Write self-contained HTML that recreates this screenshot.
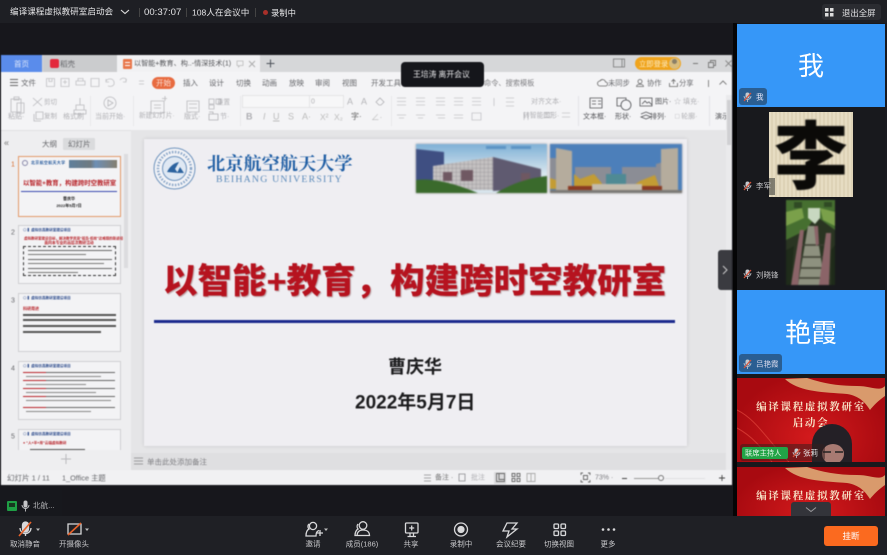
<!DOCTYPE html>
<html lang="zh"><head><meta charset="utf-8"><title>编译课程虚拟教研室启动会</title>
<style>
*{box-sizing:border-box;margin:0;padding:0}
html,body{width:887px;height:555px;overflow:hidden;background:#17171c}
body{position:relative;font-family:"Liberation Sans","Noto Sans CJK SC",sans-serif}
.a,.t{position:absolute}
.t{white-space:nowrap;line-height:1;transform:translateY(-50%)}
.c{transform:translate(-50%,-50%);text-align:center}
.w{color:#e4e4e6}
.g{color:#7f7f83;font-size:7.5px}
.k{color:#66676b;font-size:7.5px}
.f{color:#b0b0b4;font-size:7.5px}
.blur{filter:blur(.55px)}
.lab{color:#c8c8cb;font-size:7.5px;transform:translate(-50%,-50%);position:absolute;white-space:nowrap;line-height:1}
svg{position:absolute;overflow:visible}
.th{position:absolute;left:18px;width:103px;background:#f3f3f5;border:1px solid #cfcfd2}
.ln{position:absolute;height:1px;background:#555}
</style></head><body>

<!-- top bar -->
<div class="a" style="left:0;top:0;width:887px;height:23px;background:#1e1f24"></div>
<div class="t w" style="left:10px;top:12px;font-size:8.6px">编译课程虚拟教研室启动会</div>
<svg style="left:120px;top:9px" width="10" height="6"><path d="M1 1l4 3.5L9 1" fill="none" stroke="#ddd" stroke-width="1.1"/></svg>
<div class="a" style="left:139px;top:8px;width:1px;height:9px;background:#444"></div>
<div class="t w" style="left:144px;top:12.5px;font-size:9.6px">00:37:07</div>
<div class="a" style="left:186px;top:8px;width:1px;height:9px;background:#444"></div>
<div class="t w" style="left:192px;top:12.5px;font-size:8.6px">108人在会议中</div>
<div class="a" style="left:255px;top:8px;width:1px;height:9px;background:#444"></div>
<div class="a" style="left:263px;top:10px;width:5px;height:5px;border-radius:50%;background:#a8302a"></div>
<div class="t w" style="left:271px;top:12.5px;font-size:8.3px">录制中</div>
<div class="a" style="left:822px;top:4px;width:59px;height:16px;background:#2b2c31;border-radius:3px"></div>
<svg style="left:825px;top:8px" width="9" height="9"><path d="M0 0h3.5v3.5H0zM5 0h3.5v3.5H5zM0 5h3.5v3.5H0zM5 5h3.5v3.5H5z" fill="#ddd"/></svg>
<div class="t w" style="left:842px;top:12.5px;font-size:8.4px">退出全屏</div>

<!-- shared screen -->
<div class="a blur" style="left:0;top:0;width:733px;height:490px;overflow:hidden">
<div class="a" style="left:1px;top:55px;width:731px;height:430px;background:#e6e6e8"></div>
<!-- tabs -->
<div class="a" style="left:1px;top:55px;width:731px;height:17px;background:#d6d7d9"></div>
<div class="a" style="left:1px;top:55px;width:41px;height:17px;background:#5a8ceb"></div>
<div class="t" style="left:14px;top:64px;font-size:7.5px;color:#dfe8fb">首页</div>
<div class="a" style="left:43px;top:55px;width:74px;height:17px;background:#cbccce"></div>
<div class="a" style="left:50px;top:59px;width:9px;height:9px;border-radius:2px;background:#e3283c"></div>
<div class="t k" style="left:60px;top:64px">稻壳</div>
<div class="a" style="left:117px;top:55px;width:143px;height:17px;background:#f1f1f3"></div>
<div class="a" style="left:123px;top:59px;width:9px;height:10px;border-radius:1px;background:#e8764a"></div>
<div class="a" style="left:125px;top:62px;width:5px;height:1px;background:#fff"></div>
<div class="a" style="left:125px;top:65px;width:5px;height:1px;background:#fff"></div>
<div class="t" style="left:134px;top:64px;font-size:7.1px;color:#55565a">以智能+教育、构..-情深技术(1)</div>
<svg style="left:236px;top:60px" width="8" height="8"><path d="M1 1h6v4.5H4L2.5 7V5.500H1z" fill="none" stroke="#bbb" stroke-width=".8"/></svg>
<svg style="left:248px;top:60px" width="8" height="8"><path d="M1 1l6 6M7 1L1 7" stroke="#aaa" stroke-width=".9"/></svg>
<svg style="left:266px;top:59px" width="9" height="9"><path d="M4.500 .5v8M.5 4.500h8" stroke="#4c5058" stroke-width="1"/></svg>
<svg style="left:613px;top:58px" width="13" height="10"><path d="M.5 1h11v8H.5zM9 1v8" fill="none" stroke="#777" stroke-width=".8"/></svg>
<div class="a" style="left:635px;top:57px;width:46px;height:13px;border-radius:7px;background:#f0a41c"></div>
<div class="t" style="left:639px;top:63.500px;font-size:7.300px;color:#fcecc4">立即登录</div>
<div class="a" style="left:669px;top:58px;width:11px;height:11px;border-radius:50%;background:#d9bd7e"></div>
<div class="a" style="left:672px;top:59px;width:5px;height:5px;border-radius:50%;background:#8a7f67"></div>
<div class="a" style="left:693px;top:63px;width:5px;height:1px;background:#777"></div>
<svg style="left:708px;top:60px" width="8" height="8"><path d="M.5 2.500h5v5h-5zM2.500 2.500V.5h5v5H5.500" fill="none" stroke="#777" stroke-width=".9"/></svg>
<svg style="left:725px;top:60px" width="7" height="7"><path d="M.5.5l6 6M6.500.5l-6 6" stroke="#888" stroke-width=".9"/></svg>

<!-- ribbon -->
<div class="a" style="left:1px;top:72px;width:731px;height:58px;background:#f4f4f6"></div>
<svg style="left:10px;top:79px" width="8" height="7"><path d="M0 .5h8M0 3.500h8M0 6.500h8" stroke="#666" stroke-width=".9"/></svg>
<div class="t k" style="left:21px;top:83px">文件</div>
<svg style="left:46px;top:78px" width="100" height="10" fill="none" stroke="#c0c0c3" stroke-width=".8"><path d="M.5.5h8v8h-8zM3 .5v3h3v-3M15 .5h8v8h-8zM19 2v4M17 4h4M30 3h9v4h-9zM32 3V.5h5V3M45 .5h8v8h-8zM60 3c2-3 7-3 8 1s-3 5-6 4M60 1v3h3M80 3c2-3-4-4-6-1M80 1v3h-3"/><path d="M93 3h5M93 6h5"/></svg>
<div class="a" style="left:152px;top:77px;width:23px;height:12px;border-radius:7px;background:#e86b40"></div>
<div class="t c" style="left:163.500px;top:83px;font-size:7.500px;color:#fbe3d8">开始</div>
<div class="t k" style="left:183px;top:83px">插入</div>
<div class="t k" style="left:209px;top:83px">设计</div>
<div class="t k" style="left:236px;top:83px">切换</div>
<div class="t k" style="left:262px;top:83px">动画</div>
<div class="t k" style="left:289px;top:83px">放映</div>
<div class="t k" style="left:315px;top:83px">审阅</div>
<div class="t k" style="left:342px;top:83px">视图</div>
<div class="t k" style="left:371px;top:83px">开发工具</div>
<div class="t g" style="left:484px;top:83px;font-size:7.200px">命令、搜索模板</div>
<svg style="left:598px;top:79px" width="9" height="8"><path d="M2 7a2.500 2.500 0 0 1 0-5 3 3 0 0 1 5.500 1 2 2 0 0 1 0 4z" fill="none" stroke="#666" stroke-width=".8"/></svg>
<div class="t k" style="left:608px;top:83px;font-size:7.300px">未同步</div>
<svg style="left:636px;top:79px" width="8" height="8"><circle cx="4" cy="2.500" r="2" fill="none" stroke="#666" stroke-width=".8"/><path d="M.5 7.500c0-3 7-3 7 0z" fill="none" stroke="#666" stroke-width=".8"/></svg>
<div class="t k" style="left:647px;top:83px;font-size:7.300px">协作</div>
<svg style="left:669px;top:79px" width="9" height="8"><path d="M.5 4v3.500h8V4M4.500 5V1M2.500 2.500l2-2 2 2" fill="none" stroke="#666" stroke-width=".8"/></svg>
<div class="t k" style="left:679px;top:83px;font-size:7.300px">分享</div>
<div class="a" style="left:708px;top:80px;width:1px;height:7px;background:#888"></div>
<svg style="left:719px;top:80px" width="8" height="5"><path d="M.5 4.500L4 1l3.500 3.500" fill="none" stroke="#666" stroke-width=".8"/></svg>

<!-- ribbon left icons -->
<svg style="left:10px;top:96px" width="240" height="20" fill="none" stroke="#b8b8bc" stroke-width=".8">
<path d="M1 3h10v13H1zM4 1h5v3H4zM7 7h7v10H7z"/>
<path d="M23 2l9 8M32 2l-9 8"/>
<path d="M64 14h12v4H64zM70 2v7M66 9h8v5h-8z"/>
<circle cx="100" cy="7" r="6"/><path d="M98 4l5 3-5 3z"/>
<path d="M141 5h13v12h-13zM144 9h7M144 12h7M155 0v5M152 2.500h5"/>
<path d="M177 5h12v11h-12zM179 8h8M179 12h8"/>
<path d="M199 3h5v5h-5zM206 3h5v5h-5zM199 9h5v4h-5z"/>
</svg>
<div class="t f" style="left:44px;top:103px;font-size:6.500px">剪切</div>
<div class="t f" style="left:217px;top:103px;font-size:6.500px">重置</div>
<svg style="left:33px;top:111px" width="12" height="11" fill="none" stroke="#b8b8bc" stroke-width=".8"><path d="M3 1h7v7H3zM1 3v7h7"/></svg>
<div class="t f" style="left:8px;top:117px;font-size:7px">粘贴·</div>
<div class="t f" style="left:44px;top:117px;font-size:6.500px">复制</div>
<div class="t f" style="left:63px;top:117px;font-size:7px">格式刷</div>
<div class="t f" style="left:95px;top:117px;font-size:7px">当前开始·</div>
<div class="t f" style="left:139px;top:117px;font-size:6.700px">新建幻灯片·</div>
<div class="t f" style="left:184px;top:117px;font-size:7px">版式·</div>
<svg style="left:208px;top:111px" width="11" height="10" fill="none" stroke="#b0b0b4" stroke-width=".8"><path d="M1 3h9v6H1zM1 1h4v2"/></svg>
<div class="t f" style="left:220px;top:117px;font-size:7px">节·</div>

<!-- font controls -->
<div class="a" style="left:242px;top:95px;width:68px;height:13px;border:1px solid #e4e4e6;background:#f7f7f8"></div>
<div class="a" style="left:309px;top:95px;width:35px;height:13px;border:1px solid #e4e4e6;background:#f7f7f8"></div>
<div class="t f" style="left:311px;top:102px;font-size:7px">0</div>
<div class="t" style="left:246px;top:117px;font-size:9px;color:#aeaeb2;font-weight:700">B</div>
<div class="t" style="left:263px;top:117px;font-size:9px;color:#bbb;font-style:italic">I</div>
<div class="t" style="left:273px;top:117px;font-size:9px;color:#bbb;text-decoration:underline">U</div>
<div class="t" style="left:288px;top:117px;font-size:9px;color:#bbb">S</div>
<div class="t" style="left:302px;top:117px;font-size:9px;color:#bbb">A·</div>
<div class="t" style="left:320px;top:117px;font-size:8.500px;color:#bbb">X²</div>
<div class="t" style="left:334px;top:117px;font-size:8.500px;color:#bbb">X₂</div>
<div class="t" style="left:351px;top:117px;font-size:8px;color:#666">字·</div>
<div class="t" style="left:371px;top:117px;font-size:8.500px;color:#bbb">∠·</div>
<div class="t" style="left:347px;top:102px;font-size:9px;color:#b5b5b8">A</div>
<div class="t" style="left:361px;top:102px;font-size:9px;color:#b5b5b8">A</div>
<svg style="left:375px;top:97px" width="10" height="9"><path d="M1 5l4-4 4 4-3 3H4z" fill="none" stroke="#b0b0b4" stroke-width=".8"/></svg>

<!-- paragraph controls -->
<svg style="left:396px;top:97px" width="180" height="25" fill="none" stroke="#c4c4c8" stroke-width=".8">
<path d="M1 1h9M1 4.500h9M1 8h9M20 1h9M20 4.500h9M20 8h9M40 1h9M40 4.500h9M40 8h9M58 1h9M58 4.500h9M58 8h9M76 1h9M76 4.500h9M76 8h9"/>
<path d="M1 18h9M3 21h5M20 18h9M22 21h5M40 18h9M42 21h7M58 18h9M58 21h9M76 16h9v7h-9z"/>
<path d="M98 1v8M110 1h8M110 5h8M110 9h8"/>
<path d="M128 16v7M132 16v7M148 16h8M148 20h8M166 16h8M166 20h8"/>
</svg>
<div class="t f" style="left:531px;top:102px;font-size:7px">对齐文本·</div>
<div class="t f" style="left:523px;top:117px;font-size:6.800px">转智能图形·</div>
<div class="a" style="left:578px;top:96px;width:1px;height:30px;background:#e3e3e6"></div>

<!-- right ribbon -->
<svg style="left:589px;top:97px" width="120" height="25" fill="none" stroke="#4f5054" stroke-width=".8">
<path d="M1 1h12v10H1zM3 4h4M3 7h4M9 4h3M9 7h3"/>
<path d="M28 1h9v8h-9z"/><circle cx="37" cy="8" r="5" fill="#f4f4f6"/>
<path d="M51 1h12v8H51zM53 7l3-3 2 2 2-1 3 3"/>
<path d="M52 20l5-2 5 2-5 2zM52 17l5-2 5 2"/>
</svg>
<div class="t" style="left:655px;top:102px;font-size:7px;color:#505155">图片·</div>
<div class="t f" style="left:674px;top:102px;font-size:7px">☆ 填充·</div>
<div class="t" style="left:583px;top:117px;font-size:7px;color:#505155">文本框·</div>
<div class="t" style="left:615px;top:117px;font-size:7px;color:#505155">形状·</div>
<div class="t" style="left:650px;top:117px;font-size:7px;color:#505155">排列·</div>
<div class="t f" style="left:675px;top:117px;font-size:7px">□ 轮廓·</div>
<div class="t" style="left:715px;top:117px;font-size:7px;color:#505155">演示</div>
<div class="a" style="left:709px;top:96px;width:1px;height:30px;background:#e3e3e6"></div>
<div class="a" style="left:90px;top:96px;width:1px;height:30px;background:#e8e8ea"></div>
<div class="a" style="left:133px;top:96px;width:1px;height:30px;background:#e8e8ea"></div>
<div class="a" style="left:240px;top:96px;width:1px;height:30px;background:#e8e8ea"></div>
<div class="a" style="left:391px;top:96px;width:1px;height:30px;background:#e8e8ea"></div>

<!-- left panel -->
<div class="a" style="left:1px;top:130px;width:130px;height:340px;background:#eeeef0"></div>
<div class="a" style="left:1px;top:130px;width:731px;height:1px;background:#e0e0e2"></div>
<div class="t" style="left:4px;top:143px;font-size:9px;color:#777">«</div>
<div class="t k" style="left:42px;top:144px;font-size:7.500px">大纲</div>
<div class="a" style="left:63px;top:138px;width:32px;height:12px;background:#dadbdd;border-radius:1px"></div>
<div class="t k" style="left:68px;top:144px;font-size:7.500px">幻灯片</div>
<div class="a" style="left:124px;top:154px;width:4px;height:114px;background:#dcdcdf"></div>

<div class="t" style="left:11px;top:165px;font-size:7px;color:#d86a2a">1</div>
<div class="t k" style="left:11px;top:233px;font-size:7px">2</div>
<div class="t k" style="left:11px;top:301px;font-size:7px">3</div>
<div class="t k" style="left:11px;top:369px;font-size:7px">4</div>
<div class="t k" style="left:11px;top:437px;font-size:7px">5</div>

<!-- thumb 1 -->
<div class="th" style="top:156px;height:61px;border:1.500px solid #e39a6a"></div>
<div class="a" style="left:22px;top:160px;width:6px;height:6px;border-radius:50%;border:1px solid #88a;"></div>
<div class="t" style="left:31px;top:163px;font-size:4px;color:#2a5d9e;font-weight:700;letter-spacing:.3px">北京航空航天大学</div>
<div class="a" style="left:69px;top:160px;width:48px;height:8px;background:linear-gradient(90deg,#5f7f9c,#6f7a80 45%,#6d8fb5 55%,#857f70)"></div>
<div class="t" style="left:23px;top:184px;font-size:6.400px;color:#b8242a;font-weight:700">以智能+教育，构建跨时空教研室</div>
<div class="a" style="left:21px;top:191px;width:96px;height:1px;background:#3a4ab0"></div>
<div class="t c" style="left:69px;top:199px;font-size:4px;color:#222;font-weight:700">曹庆华</div>
<div class="t c" style="left:69px;top:206px;font-size:4px;color:#222;font-weight:700">2022年5月7日</div>

<!-- thumb 2 -->
<div class="th" style="top:225px;height:59px"></div>
<div class="t" style="left:23px;top:231px;font-size:3.600px;color:#2c4b8c;font-weight:700">◎ ▍虚拟仿真教研室建设项目</div>
<div class="t" style="left:24px;top:239px;font-size:3.500px;color:#b8242a;font-weight:700">虚拟教研室建设目标，解决教学资源“孤岛·低效”这难题的新途径</div>
<div class="t c" style="left:69px;top:244px;font-size:3.800px;color:#b8242a;font-weight:700">面向本专业的高层次教研活动</div>
<div class="a" style="left:23px;top:246px;width:93px;height:30px;border:1.500px dashed #333"></div>
<div class="ln" style="left:28px;top:250px;width:84px;background:#666"></div>
<div class="ln" style="left:28px;top:254px;width:58px;background:#777"></div>
<div class="ln" style="left:28px;top:259px;width:84px;background:#666"></div>
<div class="ln" style="left:28px;top:263px;width:76px;background:#777"></div>
<div class="ln" style="left:28px;top:268px;width:84px;background:#666"></div>
<div class="ln" style="left:28px;top:272px;width:50px;background:#777"></div>

<!-- thumb 3 -->
<div class="th" style="top:293px;height:59px"></div>
<div class="t" style="left:23px;top:299px;font-size:3.600px;color:#2c4b8c;font-weight:700">◎ ▍虚拟仿真教研室建设项目</div>
<div class="t" style="left:23px;top:309px;font-size:4px;color:#b8242a;font-weight:700">科研用途</div>
<div class="a" style="left:23px;top:314px;width:93px;height:1.500px;background:#555"></div>
<div class="a" style="left:23px;top:319px;width:93px;height:1.500px;background:#555"></div>
<div class="a" style="left:23px;top:325px;width:93px;height:1.500px;background:#555"></div>
<div class="a" style="left:23px;top:331px;width:78px;height:1.500px;background:#555"></div>

<!-- thumb 4 -->
<div class="th" style="top:361px;height:59px"></div>
<div class="t" style="left:23px;top:367px;font-size:3.600px;color:#2c4b8c;font-weight:700">◎ ▍虚拟仿真教研室建设项目</div>
<div class="a" style="left:23px;top:372px;width:92px;height:1px;background:linear-gradient(90deg,#b8242a 25%,#666 25%)"></div>
<div class="ln" style="left:26px;top:376px;width:75px;background:#888"></div>
<div class="a" style="left:23px;top:380px;width:92px;height:1px;background:linear-gradient(90deg,#b8242a 25%,#666 25%)"></div>
<div class="ln" style="left:26px;top:384px;width:60px;background:#888"></div>
<div class="a" style="left:23px;top:388px;width:92px;height:1px;background:linear-gradient(90deg,#b8242a 25%,#666 25%)"></div>
<div class="ln" style="left:26px;top:392px;width:70px;background:#888"></div>
<div class="a" style="left:23px;top:396px;width:92px;height:1px;background:linear-gradient(90deg,#b8242a 25%,#666 25%)"></div>
<div class="ln" style="left:26px;top:400px;width:85px;background:#888"></div>
<div class="a" style="left:23px;top:407px;width:92px;height:1px;background:linear-gradient(90deg,#b8242a 25%,#666 25%)"></div>
<div class="ln" style="left:26px;top:411px;width:65px;background:#888"></div>

<!-- thumb 5 -->
<div class="th" style="top:429px;height:21px;border-bottom:0"></div>
<div class="t" style="left:23px;top:435px;font-size:3.600px;color:#2c4b8c;font-weight:700">◎ ▍虚拟仿真教研室建设项目</div>
<div class="t" style="left:23px;top:444px;font-size:3.600px;color:#b8242a;font-weight:700">● “人+平+用”云端虚拟教研</div>
<div class="ln" style="left:30px;top:449px;width:55px"></div>
<div class="a" style="left:1px;top:450px;width:130px;height:20px;background:#eeeef0"></div>
<svg style="left:61px;top:454px" width="10" height="10"><path d="M5 0v10M0 5h10" stroke="#b9b9bc" stroke-width="1"/></svg>

<!-- canvas -->
<div class="a" style="left:131px;top:130px;width:601px;height:323px;background:#e5e5e7"></div>
<div class="a" style="left:144px;top:139px;width:543px;height:307px;background:#efeef2;box-shadow:0 0 3px #c4c4c6"></div>
<!-- logo -->
<svg style="left:153px;top:147px" width="43" height="43">
<circle cx="21.500" cy="21.500" r="20.500" fill="#f2f3f7" stroke="#6e93bd" stroke-width="1"/>
<circle cx="21.500" cy="21.500" r="12" fill="#dfe8f3" stroke="#6e93bd" stroke-width="1"/>
<circle cx="21.500" cy="21.500" r="16.500" fill="none" stroke="#8aa6c8" stroke-width="2.500" stroke-dasharray="1.500 1.500"/>
<path d="M14 25c3-6 7-9 12-10l-4 7 3 4zM27 20l4 6h-7z" fill="#2c639f"/>
</svg>
<div class="t" style="left:207px;top:164px;font-size:18.200px;color:#1f5ea4;font-weight:700;font-family:'Liberation Serif','Noto Serif CJK SC',serif">北京航空航天大学</div>
<div class="t" style="left:216px;top:180px;font-size:9.800px;color:#5a8aba;letter-spacing:1.200px;font-family:'Liberation Serif',serif">BEIHANG UNIVERSITY</div>

<!-- photos -->
<svg style="left:416px;top:144px;box-shadow:0 0 2px #999;filter:blur(.5px)" width="131" height="49" viewBox="0 0 131 49">
<defs><linearGradient id="s1" x1="0" y1="0" x2="0" y2="1"><stop offset="0" stop-color="#7eb0d6"/><stop offset=".6" stop-color="#d8e6ee"/></linearGradient>
<pattern id="gr" width="4" height="4" patternUnits="userSpaceOnUse"><rect width="4" height="4" fill="#c6c3c3"/><path d="M0 0h4M0 0v4" stroke="#8f8c90" stroke-width=".8"/></pattern></defs>
<rect width="131" height="49" fill="url(#s1)"/>
<path d="M70 2h20v3H70zM95 2h20v3H95z" fill="#5c93c4"/>
<path d="M0 5l28 3v28H0z" fill="#3f4f82"/>
<path d="M17 22l60-9 0 33H17z" fill="url(#gr)"/>
<path d="M77 13l48 12v19l-48 3z" fill="#5f5a70"/>
<path d="M27 28h9v9h-9zM45 26h12v11H45zM105 29h9v11h-9z" fill="#6f5862"/>
<path d="M0 36c15-2 35 2 62 13H0zM80 49c15-9 32-15 51-17v17z" fill="#3a6a2c"/>
</svg>
<svg style="left:550px;top:144px;box-shadow:0 0 2px #999;filter:blur(.5px)" width="132" height="49" viewBox="0 0 132 49">
<rect width="132" height="49" fill="#4c7fba"/>
<path d="M0 14h6v30H0zM25 23h36v22H25zM72 23h34v22H72zM106 20l22-6v30h-22z" fill="#8b8d95"/>
<path d="M6 4l16 3v39H6zM111 5l17-1v42h-17z" fill="#b5ac9d"/>
<path d="M56 30h20v11H56z" fill="#4f8a94"/>
<path d="M24 45V30l6 5 14-5 6 7 6 8zM78 45l12-8 15-6 5 14zM0 34l6 2v9H0z" fill="#c39c34"/>
<path d="M18 42h24v4H18zM92 42h20v4H92z" fill="#8a3a22"/>
<path d="M42 40h50v9H42z" fill="#c3bcae"/>
<path d="M0 46h132v3H0z" fill="#7a7875"/>
</svg>

<div class="t" style="left:163px;top:282px;font-size:34.500px;color:#b6131f;font-weight:900;font-family:'Liberation Sans','Noto Sans CJK SC',sans-serif;text-shadow:1px 1px 1px #b9a2a5">以智能+教育，构建跨时空教研室</div>
<div class="a" style="left:154px;top:320px;width:521px;height:2.500px;background:#1b2a8e"></div>
<div class="t" style="left:388px;top:367px;font-size:18px;color:#1c1c1e;font-weight:700">曹庆华</div>
<div class="t" style="left:355px;top:403px;font-size:19px;color:#1c1c1e;font-weight:700">2022年5月7日</div>

<!-- notes -->
<div class="a" style="left:131px;top:453px;width:601px;height:17px;background:#dfdfe1"></div>
<svg style="left:134px;top:457px" width="9" height="8"><path d="M0 1h9M0 4h9M0 7h9" stroke="#9a9a9d" stroke-width=".9"/></svg>
<div class="t g" style="left:147px;top:461.500px">单击此处添加备注</div>

<!-- status -->
<div class="a" style="left:1px;top:470px;width:731px;height:15px;background:#f1f1f3"></div>
<div class="t k" style="left:7px;top:478px;font-size:7.500px">幻灯片 1 / 11</div>
<div class="t k" style="left:62px;top:478px;font-size:7.300px">1_Office 主题</div>
<svg style="left:423px;top:473px" width="120" height="11" fill="none" stroke="#8a8a8e" stroke-width=".8"><path d="M1 2h7M1 5h7M1 8h7M36 1h6v7h-6z"/></svg>
<div class="t f" style="left:435px;top:478px;font-size:7px;color:#777">备注 ·</div>
<div class="t f" style="left:471px;top:478px;font-size:7px">批注</div>
<div class="a" style="left:494px;top:472px;width:12px;height:12px;background:#dcdcde"></div>
<svg style="left:496px;top:473px" width="70" height="10" fill="none" stroke="#666" stroke-width=".9"><path d="M.5.5h8v8h-8zM3 .5v6h5.500"/><path d="M16 .5h3v3h-3zM21 .5h3v3h-3zM16 5.500h3v3h-3zM21 5.500h3v3h-3z"/><path d="M31 .5h8v8h-8zM35 .5v8" stroke="#aaa"/></svg>
<svg style="left:581px;top:473px" width="9" height="9" fill="none" stroke="#666" stroke-width=".9"><path d="M0 2V0h2M7 0h2v2M9 7v2H7M2 9H0V7M2.500 2.500h4v4h-4z"/></svg>
<div class="t g" style="left:595px;top:478px;font-size:7px">73% ·</div>
<div class="a" style="left:622px;top:477.500px;width:5px;height:1px;background:#444"></div>
<div class="a" style="left:634px;top:478px;width:30px;height:1px;background:#999"></div>
<div class="a" style="left:658px;top:475px;width:6px;height:6px;border-radius:50%;background:#f4f4f6;border:1px solid #777"></div>
<div class="a" style="left:665px;top:478px;width:40px;height:1px;background:#e0e0e2"></div>
<svg style="left:719px;top:475px" width="6" height="6"><path d="M3 0v6M0 3h6" stroke="#444" stroke-width=".9"/></svg>

<!-- right scrollbar -->
<div class="a" style="left:726px;top:95px;width:6px;height:375px;background:#eaeaec"></div>
<div class="a" style="left:727px;top:100px;width:4px;height:45px;background:#d0d0d3"></div>

<!-- dark overlay tab -->
<div class="a" style="left:718px;top:250px;width:14px;height:40px;background:#3a3b40;border-radius:3px 0 0 3px"></div>
<svg style="left:722px;top:265px" width="6" height="10"><path d="M1 1l4 4-4 4" fill="none" stroke="#ccc" stroke-width="1"/></svg>

<!-- toast -->
<div class="a" style="left:401px;top:62px;width:83px;height:25px;background:#15161b;border-radius:4px"></div>
<div class="t" style="left:413px;top:75px;font-size:7.800px;color:#e6e6e8">王培涛 离开会议</div>
</div>

<!-- mic status -->
<div class="a" style="left:0;top:490px;width:62px;height:26px;background:#17181d"></div>
<div class="a" style="left:7px;top:501px;width:10px;height:10px;background:#1f9e45;border-radius:1px"></div>
<div class="a" style="left:9px;top:503px;width:6px;height:4px;background:#17351f"></div>
<svg style="left:21px;top:500px" width="9" height="12"><rect x="2.500" y=".5" width="4" height="7" rx="2" fill="#c5c5c8"/><path d="M1 5a3.500 3.500 0 0 0 7 0M4.500 9v2.500" fill="none" stroke="#c5c5c8" stroke-width=".9"/></svg>
<div class="t" style="left:33px;top:505.500px;font-size:7.600px;color:#b5b5b8">北航...</div>

<!-- right column -->
<div class="a" style="left:733px;top:23px;width:4px;height:493px;background:#050506"></div>
<div class="a" style="left:737px;top:23px;width:150px;height:493px;background:#18191d"></div>
<div class="a" style="left:885px;top:23px;width:2px;height:493px;background:#1a1a1f"></div>

<div class="a" style="left:737px;top:24px;width:148px;height:83px;background:#3697f8"></div>
<div class="t c" style="left:811px;top:66px;font-size:26px;color:#fff;font-family:'Liberation Sans','WenQuanYi Zen Hei','Noto Sans CJK SC',sans-serif">我</div>
<div class="a" style="left:739px;top:88px;width:28px;height:17px;background:#2a5e92;border-radius:3px"></div>
<svg style="left:743px;top:92px" width="9" height="10"><rect x="2.500" y=".5" width="4" height="6" rx="2" fill="#c5c9cf"/><path d="M1 4a3.500 3.500 0 0 0 7 0M4.500 7.500V10" fill="none" stroke="#c5c9cf" stroke-width=".8"/><path d="M1 9L8 1" stroke="#d8533a" stroke-width="1.200"/></svg>
<div class="t" style="left:756px;top:97px;font-size:7.500px;color:#eef">我</div>

<!-- 李 -->
<div class="a" style="left:769px;top:112px;width:84px;height:85px;background:repeating-linear-gradient(90deg,#e6dcc2 0 2px,#ded3b7 2px 4px);overflow:hidden">
<div class="t c" style="left:42px;top:40px;font-size:74px;line-height:1;color:#0b0a08;font-weight:900;font-family:'Noto Sans CJK SC',sans-serif;filter:blur(.7px)">李</div>
</div>
<svg style="left:743px;top:181px" width="9" height="10"><rect x="2.500" y=".5" width="4" height="6" rx="2" fill="#c5c9cf"/><path d="M1 4a3.500 3.500 0 0 0 7 0M4.500 7.500V10" fill="none" stroke="#c5c9cf" stroke-width=".8"/><path d="M1 9L8 1" stroke="#d8533a" stroke-width="1.200"/></svg>
<div class="a" style="left:769px;top:178px;width:6px;height:17px;background:#55554f;opacity:.7"></div>
<div class="t" style="left:756px;top:186px;font-size:7.500px;color:#c9c9cc">李军</div>

<!-- forest -->
<svg style="left:786px;top:200px;filter:blur(.8px)" width="49" height="85" viewBox="0 0 49 85">
<rect width="49" height="85" fill="#2a3522"/>
<path d="M0 0h49v30L30 16 20 30 0 40z" fill="#466f30"/>
<path d="M22 8h12v10l-5 6-7-6z" fill="#c8d8c0"/>
<path d="M34 8l15 4v14l-12-6zM0 12l16-4 2 10L0 26z" fill="#7aa04a"/>
<path d="M8 2h8v6H8zM38 2h8v5h-8z" fill="#2f4a24"/>
<path d="M22 26h8l9 59H12z" fill="#8e917f"/>
<path d="M16 45h22M14 57h26M12 68h30M10 78h34" stroke="#3a3d30" stroke-width="1.500"/>
<path d="M5 85l9-55h4L12 85zM33 85l7-52h5l-2 52zM28 26l2 20 3-2-1-18z" fill="#8b6468"/>
<path d="M0 50l8-4-3 39H0zM45 50l4-5v40h-4z" fill="#1f2b1a"/>
</svg>
<svg style="left:743px;top:269px" width="9" height="10"><rect x="2.500" y=".5" width="4" height="6" rx="2" fill="#c5c9cf"/><path d="M1 4a3.500 3.500 0 0 0 7 0M4.500 7.500V10" fill="none" stroke="#c5c9cf" stroke-width=".8"/><path d="M1 9L8 1" stroke="#d8533a" stroke-width="1.200"/></svg>
<div class="t" style="left:756px;top:274.500px;font-size:7.500px;color:#c9c9cc">刘晓锋</div>

<!-- 艳霞 -->
<div class="a" style="left:737px;top:290px;width:148px;height:84px;background:#3697f8"></div>
<div class="t c" style="left:811px;top:333px;font-size:26px;color:#fff;font-family:'Liberation Sans','WenQuanYi Zen Hei','Noto Sans CJK SC',sans-serif">艳霞</div>
<div class="a" style="left:739px;top:354px;width:43px;height:18px;background:#2a5e92;border-radius:3px"></div>
<svg style="left:743px;top:359px" width="9" height="10"><rect x="2.500" y=".5" width="4" height="6" rx="2" fill="#c5c9cf"/><path d="M1 4a3.500 3.500 0 0 0 7 0M4.500 7.500V10" fill="none" stroke="#c5c9cf" stroke-width=".8"/><path d="M1 9L8 1" stroke="#d8533a" stroke-width="1.200"/></svg>
<div class="t" style="left:756px;top:363.500px;font-size:7.500px;color:#dde">吕艳霞</div>

<!-- red tile 1 -->
<div class="a" style="left:737px;top:378px;width:148px;height:84px;overflow:hidden;background:radial-gradient(ellipse at 50% 70%,#d31a1c,#a80a10 75%)">
<svg style="left:0;top:0" width="148" height="84"><path d="M48 1L70 0C85 5 100 8 120 8 135 8 142 14 148 8V18C142 22 136 28 133 32 128 24 122 18 110 16 85 14 62 14 48 1Z" fill="#d99a6c"/><path d="M0 32c20 10 30 30 52 52M0 50c15 8 25 20 35 34" fill="none" stroke="#e0453a" stroke-width="1" opacity=".7"/></svg>
<div class="t c" style="left:74px;top:30px;font-size:10.500px;font-weight:700;letter-spacing:1.700px;color:#f8e4c8;font-family:'Liberation Serif','Noto Serif CJK SC',serif">编译课程虚拟教研室</div>
<div class="t c" style="left:74px;top:46px;font-size:10.500px;font-weight:700;letter-spacing:1.700px;color:#f8e4c8;font-family:'Liberation Serif','Noto Serif CJK SC',serif">启动会</div>
<svg style="left:0;top:0" width="148" height="84"><circle cx="95" cy="66" r="20" fill="#242026"/><path d="M75 84V66h40v18z" fill="#242026"/><ellipse cx="96" cy="76" rx="11" ry="10" fill="#a87a72"/><path d="M86 74h8M98 74h8" stroke="#222" stroke-width="1.500"/></svg>
<div class="a" style="left:3px;top:66px;width:85px;height:17px;background:rgba(50,30,30,.5);border-radius:3px"></div>
<div class="a" style="left:5px;top:69px;width:46px;height:12px;background:#22a447;border-radius:2px"></div>
<div class="t" style="left:8px;top:75px;font-size:7.300px;color:#e6f5e8">联席主持人</div>
<svg style="left:55px;top:70px" width="9" height="10"><rect x="2.500" y=".5" width="4" height="6" rx="2" fill="#c5c9cf"/><path d="M1 4a3.500 3.500 0 0 0 7 0M4.500 7.500V10" fill="none" stroke="#c5c9cf" stroke-width=".8"/><path d="M1 9L8 1" stroke="#d8533a" stroke-width="1.200"/></svg>
<div class="t" style="left:66px;top:75px;font-size:7.500px;color:#eee">张莉</div>
</div>

<!-- red tile 2 -->
<div class="a" style="left:737px;top:467px;width:148px;height:49px;overflow:hidden;background:radial-gradient(ellipse at 50% 90%,#d31a1c,#a80a10 75%)">
<svg style="left:0;top:0" width="148" height="49"><path d="M48 1L70 0C85 5 100 8 120 8 135 8 142 14 148 8V18C142 22 136 28 133 32 128 24 122 18 110 16 85 14 62 14 48 1Z" fill="#d99a6c"/></svg>
<div class="t c" style="left:74px;top:30px;font-size:10.500px;font-weight:700;letter-spacing:1.700px;color:#f8e4c8;font-family:'Liberation Serif','Noto Serif CJK SC',serif">编译课程虚拟教研室</div>
</div>
<div class="a" style="left:791px;top:502px;width:40px;height:14px;background:#33343a;border-radius:3px 3px 0 0"></div>
<svg style="left:805px;top:507px" width="12" height="6"><path d="M1 .5l5 4 5-4" fill="none" stroke="#9a9a9d" stroke-width="1"/></svg>

<!-- bottom bar -->
<div class="a" style="left:0;top:516px;width:887px;height:39px;background:#1f2025"></div>
<svg style="left:0;top:516px" width="887" height="39" fill="none" stroke="#d8d8da" stroke-width="1.300">
<!-- mic off -->
<rect x="22.500" y="6" width="6" height="10" rx="3" fill="#d8d8da"/><path d="M20 12a5.500 5.500 0 0 0 11 0M25.500 18v2"/><path d="M19 20L31 6" stroke="#e8622a" stroke-width="1.600"/>
<path d="M36 12.500h4l-2 2.500z" fill="#bbb" stroke="none"/>
<!-- cam off -->
<path d="M68 8h13v10H68z"/><path d="M68 19L81 7" stroke="#e8622a" stroke-width="1.600"/>
<path d="M85 12.500h4l-2 2.500z" fill="#bbb" stroke="none"/>
<!-- invite -->
<circle cx="313" cy="10" r="3.600"/><path d="M309 8a3.500 3.500 0 0 0 0 5c-2 1-3 4-3 7h10c0-3 1-5 3-5.500"/><path d="M317 17h6M320 14v6" />
<path d="M324 12.500h4l-2 2.500z" fill="#bbb" stroke="none"/>
<!-- members -->
<circle cx="363" cy="9.500" r="3.800"/><path d="M358 8a4 4 0 0 0 0 5c-2 1-3 4-3 6.500h14.500c0-3-2-5.500-6.500-5.500s-6 3-6 5.500"/>
<!-- share -->
<rect x="405.500" y="7" width="12.500" height="10" rx="1"/><path d="M411.700 9.500v5M409.200 12h5M407.500 20.500h8.500" /><path d="M410 17.500v2.500M413.500 17.500v2.500"/>
<!-- rec -->
<circle cx="461" cy="13.500" r="6.500"/><circle cx="461" cy="13.500" r="3" fill="#d8d8da"/>
<!-- notes -->
<path d="M507 7h10l-5 6h5l-10 8 2-6h-6z"/>
<!-- view -->
<rect x="554" y="8" width="4.500" height="4.500" rx="1"/><rect x="561" y="8" width="4.500" height="4.500" rx="1"/><rect x="554" y="15" width="4.500" height="4.500" rx="1"/><rect x="561" y="15" width="4.500" height="4.500" rx="1"/>
<!-- more -->
<circle cx="603" cy="13.500" r="1.300" fill="#d8d8da" stroke="none"/><circle cx="608.500" cy="13.500" r="1.300" fill="#d8d8da" stroke="none"/><circle cx="614" cy="13.500" r="1.300" fill="#d8d8da" stroke="none"/>
</svg>
<div class="lab" style="left:25px;top:544px">取消静音</div>
<div class="lab" style="left:74px;top:544px">开摄像头</div>
<div class="lab" style="left:313px;top:544px">邀请</div>
<div class="lab" style="left:362px;top:544px">成员(186)</div>
<div class="lab" style="left:411px;top:544px">共享</div>
<div class="lab" style="left:461px;top:544px">录制中</div>
<div class="lab" style="left:511px;top:544px">会议纪要</div>
<div class="lab" style="left:559px;top:544px">切换视图</div>
<div class="lab" style="left:608px;top:544px">更多</div>
<div class="a" style="left:824px;top:526px;width:54px;height:20px;background:#fb6a1f;border-radius:3px"></div>
<div class="t c" style="left:851px;top:536px;font-size:8.500px;color:#fff">挂断</div>
</body></html>
